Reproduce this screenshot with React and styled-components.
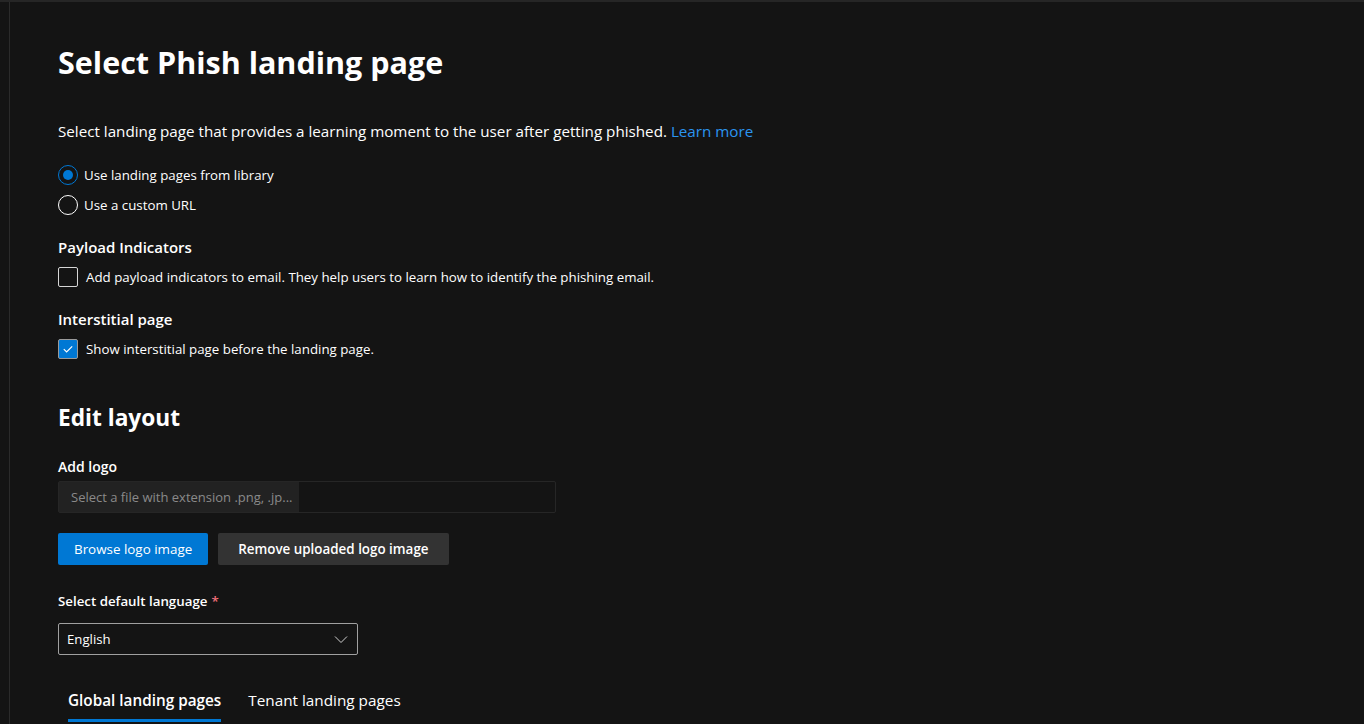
import React, { useState } from 'react';
import styled, { createGlobalStyle } from 'styled-components';

const Global = createGlobalStyle`
  html, body {
    margin: 0;
    padding: 0;
    background: #141414;
  }
  body {
    font-family: "Open Sans", "Noto Sans", sans-serif;
    color: #ffffff;
  }
`

const Frame = styled.div`
  min-height: 724px;
  border-top: 2px solid #262626;
  box-sizing: border-box;
  display: flex;
`
const Rail = styled.div`
  width: 9px;
  border-right: 1px solid #2b2b2b;
  flex: none;
`
const Main = styled.main`
  padding: 38px 48px 0;
  display: flex;
  flex-direction: column;
  align-items: flex-start;
`
const Title = styled.h1`
  margin: 0;
  font-size: 30.5px;
  font-weight: 700;
  line-height: 44px;
  color: #ffffff;
`
const Intro = styled.p`
  margin: 37px 0 0;
  font-size: 15.2px;
  line-height: 20px;
  color: #ffffff;
`
const Link = styled.a`
  color: #2b95f0;
  text-decoration: none;
`
const Options = styled.div`
  margin-top: 24px;
  display: flex;
  flex-direction: column;
  gap: 10px;
`
const Radio = styled.label`
  display: flex;
  align-items: center;
  gap: 6px;
  font-size: 13.3px;
  line-height: 20px;
`
const RadioDot = styled.span`
  width: 20px;
  height: 20px;
  box-sizing: border-box;
  border-radius: 50%;
  border: 1px solid ${p => (p.$on ? '#0078d4' : '#ffffff')};
  display: flex;
  align-items: center;
  justify-content: center;
  &::after {
    content: '';
    width: 10px;
    height: 10px;
    border-radius: 50%;
    background: ${p => (p.$on ? '#0078d4' : 'transparent')};
  }
`
const SubHead = styled.h3`
  margin: 22px 0 0;
  font-size: 15px;
  font-weight: 600;
  line-height: 20px;
`
const Check = styled.label`
  margin-top: 10px;
  display: flex;
  align-items: center;
  gap: 8px;
  font-size: 13.3px;
  line-height: 20px;
`
const Box = styled.span`
  width: 20px;
  height: 20px;
  box-sizing: border-box;
  border: 1px solid ${p => (p.$on ? '#9a9a9a' : '#d6d6d6')};
  border-radius: 2px;
  background: ${p => (p.$on ? '#0078d4' : 'transparent')};
  display: flex;
  align-items: center;
  justify-content: center;
`
const Section = styled.h2`
  margin: 43px 0 0;
  font-size: 22.7px;
  font-weight: 700;
  line-height: 32px;
`
const FieldLabel = styled.div`
  margin-top: ${p => p.$top}px;
  font-size: ${p => p.$size || 13.3}px;
  font-weight: 600;
  line-height: 20px;
`
const Req = styled.span`
  color: #f1707b;
  margin-left: 4px;
`
const FileField = styled.div`
  margin-top: 4px;
  width: 498px;
  height: 32px;
  box-sizing: border-box;
  border: 1px solid #262626;
  border-radius: 2px;
  display: flex;
`
const FileName = styled.div`
  width: 240px;
  background: #222222;
  color: #8a8a8a;
  font-size: 13px;
  display: flex;
  align-items: center;
  padding-left: 12px;
  box-sizing: border-box;
`
const Buttons = styled.div`
  margin-top: 20px;
  display: flex;
  gap: 10px;
`
const Button = styled.button`
  height: 32px;
  padding: 0 ${p => (p.$primary ? 16 : 20)}px;
  border: none;
  border-radius: 2px;
  font-family: inherit;
  font-size: 13.4px;
  color: #ffffff;
  font-weight: ${p => (p.$primary ? 400 : 600)};
  background: ${p => (p.$primary ? '#0078d4' : '#333333')};
`
const Select = styled.div`
  margin-top: 12px;
  width: 300px;
  height: 32px;
  box-sizing: border-box;
  border: 1px solid #a0a0a0;
  border-radius: 2px;
  display: flex;
  align-items: center;
  justify-content: space-between;
  padding: 0 8px 0 8px;
  font-size: 13.2px;
`
const Tabs = styled.div`
  margin-top: 23px;
  display: flex;
  gap: 7px;
`
const Tab = styled.div`
  padding: 0 10px;
  height: 44px;
  position: relative;
  display: flex;
  align-items: center;
  font-size: 15.3px;
  font-weight: ${p => (p.$active ? 600 : 400)};
  &::after {
    content: '';
    position: absolute;
    left: 10px;
    right: 10px;
    bottom: 0;
    height: 3px;
    background: ${p => (p.$active ? '#0078d4' : 'transparent')};
  }
`

export default function App() {
  const [choice, setChoice] = useState('library')

  return (
    <>
      <Global />
      <Frame>
        <Rail />
        <Main>
          <Title>Select Phish landing page</Title>
          <Intro>
            Select landing page that provides a learning moment to the user after getting phished. <Link href="#">Learn more</Link>
          </Intro>
          <Options>
            <Radio onClick={() => setChoice('library')}>
              <RadioDot $on={choice === 'library'} />
              Use landing pages from library
            </Radio>
            <Radio onClick={() => setChoice('custom')}>
              <RadioDot $on={choice === 'custom'} />
              Use a custom URL
            </Radio>
          </Options>

          <SubHead>Payload Indicators</SubHead>
          <Check>
            <Box />
            Add payload indicators to email. They help users to learn how to identify the phishing email.
          </Check>

          <SubHead>Interstitial page</SubHead>
          <Check>
            <Box $on>
              <svg width="12" height="12" viewBox="0 0 12 12">
                <path d="M1.8 6.2l2.8 2.8L10.2 3.4" fill="none" stroke="#ffffff" strokeWidth="1.2" />
              </svg>
            </Box>
            Show interstitial page before the landing page.
          </Check>

          <Section>Edit layout</Section>
          <FieldLabel $top={23} $size={14}>Add logo</FieldLabel>
          <FileField>
            <FileName>Select a file with extension .png, .jp...</FileName>
          </FileField>
          <Buttons>
            <Button $primary>Browse logo image</Button>
            <Button>Remove uploaded logo image</Button>
          </Buttons>

          <FieldLabel $top={26}>Select default language<Req>*</Req></FieldLabel>
          <Select>
            English
            <svg width="16" height="16" viewBox="0 0 16 16">
              <path d="M2 5.5L8 11.5l6-6" fill="none" stroke="#d0d0d0" strokeWidth="1" />
            </svg>
          </Select>

          <Tabs>
            <Tab $active>Global landing pages</Tab>
            <Tab>Tenant landing pages</Tab>
          </Tabs>
        </Main>
      </Frame>
    </>
  )
}
